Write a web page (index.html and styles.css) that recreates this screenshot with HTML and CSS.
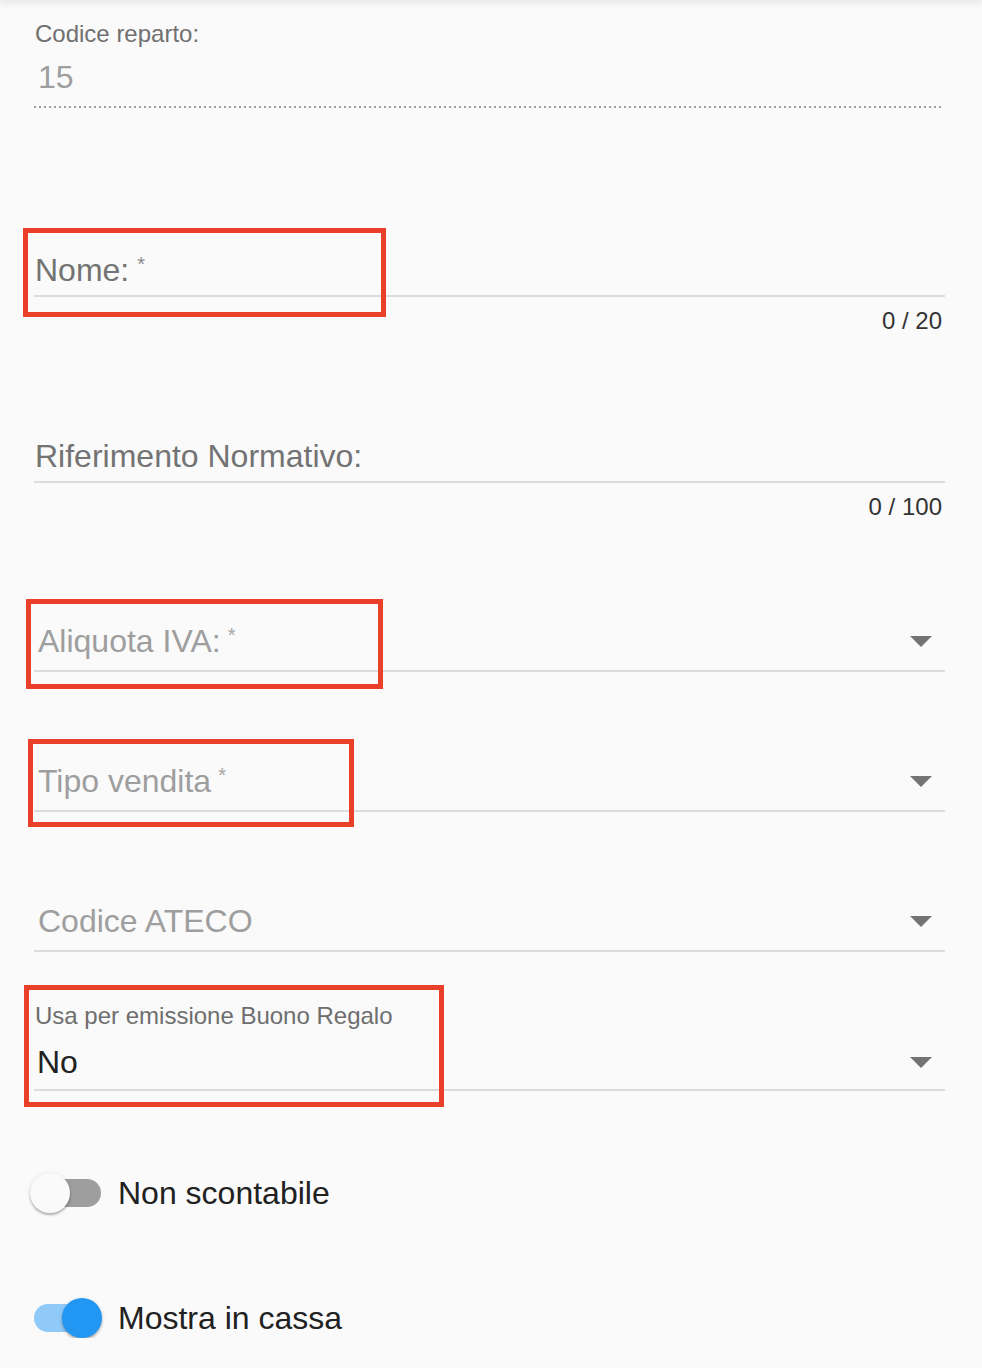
FILE: index.html
```html
<!DOCTYPE html>
<html lang="it">
<head>
<meta charset="utf-8">
<title>Reparto</title>
<link rel="stylesheet" href="styles.css">
</head>
<body>
<div class="bar-shadow"></div>
<main class="form">
  <section class="static-field">
    <div class="small-label">Codice reparto:</div>
    <div class="static-value">15</div>
    <div class="dotted"></div>
  </section>

  <section class="text-field tf-nome">
    <div class="tf-input">Nome:<span class="req">*</span></div>
    <div class="counter">0 / 20</div>
    <div class="hl hl-nome"></div>
  </section>

  <section class="text-field tf-rif">
    <div class="tf-input">Riferimento Normativo:</div>
    <div class="counter">0 / 100</div>
  </section>

  <section class="select-field sf-aliquota">
    <div class="sf-input"><span class="placeholder">Aliquota IVA:<span class="req">*</span></span><span class="caret"></span></div>
    <div class="hl hl-aliquota"></div>
  </section>

  <section class="select-field sf-tipo">
    <div class="sf-input"><span class="placeholder">Tipo vendita<span class="req">*</span></span><span class="caret"></span></div>
    <div class="hl hl-tipo"></div>
  </section>

  <section class="select-field sf-ateco">
    <div class="sf-input"><span class="placeholder">Codice ATECO</span><span class="caret"></span></div>
  </section>

  <section class="select-field sf-usa">
    <div class="small-label usa-label">Usa per emissione Buono Regalo</div>
    <div class="sf-input sf-value"><span class="value">No</span><span class="caret"></span></div>
    <div class="hl hl-usa"></div>
  </section>

  <label class="switch-row sw-1">
    <span class="switch"><span class="track"></span><span class="thumb"></span></span>
    <span class="switch-label">Non scontabile</span>
  </label>

  <label class="switch-row sw-2">
    <span class="switch on"><span class="track"></span><span class="thumb"></span></span>
    <span class="switch-label">Mostra in cassa</span>
  </label>
</main>
</body>
</html>
```

FILE: styles.css
```css
* { box-sizing: border-box; }

html, body {
  margin: 0;
  padding: 0;
  background: #fafafa;
  font-family: "Liberation Sans", Arial, Helvetica, sans-serif;
  overflow: hidden;
}

.bar-shadow {
  height: 0;
  box-shadow: 0 1px 6px 1px rgba(0, 0, 0, 0.22);
}

.form {
  padding: 0 37px 0 34px;
  display: flex;
  flex-direction: column;
}

/* static (read-only) field */
.static-field {
  padding-top: 20px;
}

.small-label {
  font-size: 24px;
  line-height: 28px;
  color: #707070;
  padding-left: 1px;
}

.static-value {
  margin-top: 11px;
  font-size: 32px;
  line-height: 36px;
  color: #9e9e9e;
  padding-left: 4px;
}

.dotted {
  margin-top: 11px;
  height: 2px;
  margin-right: 3px;
  background-image: linear-gradient(to right, #a0a0a0 0, #a0a0a0 2px, transparent 2px);
  background-size: 5px 2px;
  background-repeat: repeat-x;
}

/* text fields */
.text-field,
.select-field {
  position: relative;
}

.tf-input {
  font-size: 32px;
  line-height: 36px;
  color: #737373;
  padding: 0 0 7px 1px;
  border-bottom: 2px solid #dcdcdc;
}

.req {
  font-size: 20px;
  line-height: 0;
  color: #8a8a8a;
  vertical-align: 10px;
  margin-left: 8px;
}

.placeholder .req {
  color: #a6a6a6;
  margin-left: 7px;
}

.counter {
  margin-top: 10px;
  font-size: 24px;
  line-height: 28px;
  color: #333;
  text-align: right;
  padding-right: 3px;
}

.tf-nome { margin-top: 144px; }
.tf-rif { margin-top: 103px; }

/* select fields */
.sf-input {
  display: flex;
  align-items: center;
  justify-content: space-between;
  font-size: 32px;
  line-height: 36px;
  padding: 0 13px 11px 4px;
  border-bottom: 2px solid #dcdcdc;
}

.placeholder { color: #9e9e9e; }

.value { color: #212121; }

.caret {
  width: 0;
  height: 0;
  border-left: 11px solid transparent;
  border-right: 11px solid transparent;
  border-top: 11px solid #737373;
  margin-top: 1px;
}

.sf-aliquota { margin-top: 102px; }
.sf-tipo { margin-top: 91px; }
.sf-ateco { margin-top: 91px; }
.sf-usa { margin-top: 50px; }

.usa-label { color: #6e6e6e; }

.sf-value {
  margin-top: 14px;
  padding-bottom: 9px;
  padding-left: 3px;
}

/* highlight annotation boxes (overlay) */
.hl {
  position: absolute;
  border: 5px solid #ea4029;
  pointer-events: none;
}

.hl-nome { top: -24px; left: -11px; width: 363px; height: 89px; }
.hl-aliquota { top: -24px; left: -8px; width: 357px; height: 90px; }
.hl-tipo { top: -24px; left: -6px; width: 326px; height: 88px; }
.hl-usa { top: -17px; left: -10px; width: 420px; height: 122px; }

/* switches */
.switch-row {
  display: flex;
  align-items: center;
  margin-left: -4px;
  height: 40px;
}

.sw-1 { margin-top: 82px; }
.sw-2 { margin-top: 85px; }

.switch {
  position: relative;
  width: 73px;
  height: 40px;
  flex: none;
}

.track {
  position: absolute;
  left: 4px;
  top: 6px;
  width: 67px;
  height: 28px;
  border-radius: 14px;
  background: #9e9e9e;
}

.thumb {
  position: absolute;
  left: 0;
  top: 0;
  width: 40px;
  height: 40px;
  border-radius: 50%;
  background: #fafafa;
  box-shadow: 0 2px 2px rgba(0, 0, 0, 0.22), 0 1px 4px rgba(0, 0, 0, 0.14);
}

.switch.on .track { background: #90caf9; }
.switch.on .thumb {
  left: 32px;
  background: #2196f3;
}

.switch-label {
  margin-left: 15px;
  font-size: 32px;
  line-height: 36px;
  color: #212121;
}
```
